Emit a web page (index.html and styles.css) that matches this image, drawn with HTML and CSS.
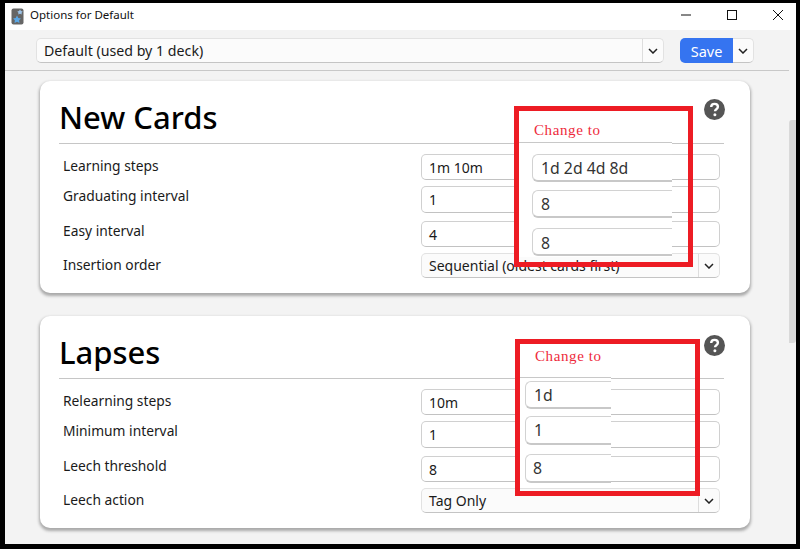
FILE: index.html
```html
<!DOCTYPE html>
<html lang="en">
<head>
<meta charset="utf-8">
<title>Options for Default</title>
<link rel="stylesheet" href="styles.css">
</head>
<body>
<div class="window">
  <header class="titlebar">
    <svg class="app-icon" width="14" height="17" viewBox="0 0 14 17"><rect x="0.5" y="0.5" width="12" height="16" rx="2" fill="#666"/><path d="M9 1.5l1 1.6 1.7.4-1.1 1.3.1 1.7L9 5.8l-1.700.7.1-1.700L6.300 3.500 8 3.100z" fill="#9ec4e8"/><path d="M6 7.500l1.300 2.400 2.700.5-1.900 1.900.4 2.700L6 13.800l-2.500 1.200.4-2.700L2 10.400l2.700-.5z" fill="#5aa7e6"/></svg>
    <span class="title-text">Options for Default</span>
    <div class="win-controls">
      <svg width="12" height="12" viewBox="0 0 12 12"><path d="M1 6h10" stroke="#111" fill="none"/></svg>
      <svg width="12" height="12" viewBox="0 0 12 12"><rect x="1.500" y="1.500" width="9" height="9" stroke="#111" fill="none"/></svg>
      <svg width="12" height="12" viewBox="0 0 12 12"><path d="M1 1l10 10M11 1L1 11" stroke="#111" fill="none"/></svg>
    </div>
  </header>
  <div class="toolbar">
    <div class="toolbar-inner">
      <div class="select deck-select">
        <span class="select-value">Default (used by 1 deck)</span>
        <span class="select-arrow"><svg width="10" height="6" viewBox="0 0 10 6"><path d="M1 1l4 4 4-4" stroke="#222" stroke-width="1.500" fill="none"/></svg></span>
      </div>
      <div class="save-group">
        <button class="save-btn">Save</button>
        <span class="save-arrow"><svg width="10" height="6" viewBox="0 0 10 6"><path d="M1 1l4 4 4-4" stroke="#222" stroke-width="1.500" fill="none"/></svg></span>
      </div>
    </div>
  </div>
  <div class="content-row">
    <main class="content">
      <section class="card">
        <h2 class="card-title">New Cards</h2>
        <svg class="help" width="21" height="21" viewBox="0 0 21 21"><circle cx="10.500" cy="10.500" r="10.500" fill="#555"/><path d="M7.200 8.100c0-2 1.500-3.200 3.400-3.200s3.300 1.100 3.300 2.900c0 2.400-2.900 2.500-2.900 4.500" stroke="#fff" stroke-width="2.400" fill="none"/><circle cx="10.900" cy="15.800" r="1.500" fill="#fff"/></svg>
        <div class="rows">
          <div class="label">Learning steps</div><div class="field">1m 10m</div>
          <div class="label label-up">Graduating interval</div><div class="field field-tall">1</div>
          <div class="label label-up">Easy interval</div><div class="field">4</div>
          <div class="label">Insertion order</div>
          <div class="select row-select"><span class="select-value">Sequential (oldest cards first)</span><span class="select-arrow"><svg width="10" height="6" viewBox="0 0 10 6"><path d="M1 1l4 4 4-4" stroke="#222" stroke-width="1.500" fill="none"/></svg></span></div>
        </div>
        <div class="note note-new">
          <div class="paste paste-new">
            <span class="change-to">Change to</span>
            <span class="paste-line"></span>
            <div class="paste-field pf-a">1d 2d 4d 8d</div>
            <div class="paste-field pf-b">8</div>
            <div class="paste-field pf-c">8</div>
          </div>
        </div>
      </section>
      <section class="card">
        <h2 class="card-title">Lapses</h2>
        <svg class="help help-lapses" width="21" height="21" viewBox="0 0 21 21"><circle cx="10.500" cy="10.500" r="10.500" fill="#555"/><path d="M7.200 8.100c0-2 1.500-3.200 3.400-3.200s3.300 1.100 3.300 2.900c0 2.400-2.900 2.500-2.900 4.500" stroke="#fff" stroke-width="2.400" fill="none"/><circle cx="10.900" cy="15.800" r="1.500" fill="#fff"/></svg>
        <div class="rows">
          <div class="label">Relearning steps</div><div class="field">10m</div>
          <div class="label label-up">Minimum interval</div><div class="field field-tall">1</div>
          <div class="label label-up">Leech threshold</div><div class="field">8</div>
          <div class="label">Leech action</div>
          <div class="select row-select"><span class="select-value">Tag Only</span><span class="select-arrow"><svg width="10" height="6" viewBox="0 0 10 6"><path d="M1 1l4 4 4-4" stroke="#222" stroke-width="1.500" fill="none"/></svg></span></div>
        </div>
        <div class="note note-lapses">
          <div class="paste paste-lapses">
            <span class="change-to change-to-lapses">Change to</span>
            <span class="paste-line"></span>
            <div class="paste-field pf-d">1d</div>
            <div class="paste-field pf-e">1</div>
            <div class="paste-field pf-f">8</div>
          </div>
        </div>
      </section>
    </main>
    <div class="scrollbar"><div class="thumb"></div></div>
  </div>
</div>
</body>
</html>
```
FILE: styles.css
```css
* { box-sizing: border-box; }
html, body { margin: 0; height: 100%; }
body {
  background: #000;
  padding: 3px 4px 5px 5px;
  font-family: "Noto Sans", "Open Sans", sans-serif;
  color: #1a1a1a;
  overflow: hidden;
}
.window {
  height: 541px;
  background: #f3f3f3;
  display: flex;
  flex-direction: column;
  overflow: hidden;
}
.titlebar {
  height: 27px;
  flex: none;
  background: #fff;
  display: flex;
  align-items: center;
  padding-left: 6px;
}
.app-icon { flex: none; }
.title-text { font-size: 11.500px; line-height: 16px; margin: -4px 0 0 5px; color: #111; }
.win-controls {
  margin-left: auto;
  display: flex;
  gap: 34px;
  padding-right: 12px;
  margin-top: -3px;
}
.toolbar { height: 41px; flex: none; padding-right: 7px; }
.toolbar-inner {
  height: 41px;
  border-bottom: 1px solid #c8c8c8;
  display: flex;
  align-items: flex-start;
  padding: 8px 35px 0 31px;
}
.select {
  display: flex;
  background: #fbfbfb;
  border: 1px solid #e2e2e2;
  border-bottom: 1px solid #c4c4c4;
  border-radius: 5px;
  font-size: 14px;
}
.select-value { flex: 1; padding-left: 7px; white-space: nowrap; overflow: hidden; }
.select-arrow {
  width: 21px;
  flex: none;
  border-left: 1px solid #ddd;
  display: flex;
  align-items: center;
  justify-content: center;
}
.deck-select { width: 629px; height: 25px; line-height: 23px; font-size: 14.200px; }
.save-group { margin-left: 16px; display: flex; height: 25px; }
.save-btn {
  width: 53px;
  height: 25px;
  border: 0;
  padding: 0;
  background: #3574f0;
  color: #fff;
  font: 14.500px "Noto Sans", sans-serif;
  border-radius: 5px 0 0 5px;
}
.save-arrow {
  width: 21px;
  background: #fbfbfb;
  border: 1px solid #e2e2e2;
  border-bottom-color: #c4c4c4;
  border-left: 0;
  border-radius: 0 5px 5px 0;
  display: flex;
  align-items: center;
  justify-content: center;
}
.content-row { flex: 1; display: flex; min-height: 0; }
.content { flex: 1; padding: 10px 0 0 35px; min-width: 0; }
.scrollbar { width: 7px; flex: none; padding-top: 49px; }
.thumb { height: 223px; background: #d9d9d9; border-radius: 3px 0 3px 0; }
.card {
  position: relative;
  width: 710px;
  height: 212px;
  background: #fff;
  border-radius: 10px;
  box-shadow: 0 2px 3px 1px rgba(0, 0, 0, .3);
  padding: 0 26px 0 19px;
  margin-bottom: 23px;
}
.card-title {
  margin: 0;
  height: 63px;
  border-bottom: 1px solid #c6c6c6;
  padding: 12px 0 0;
  font-size: 31px;
  line-height: 48px;
  font-weight: 500;
  color: #000;
}
.help { position: absolute; left: 664px; top: 18px; }
.help-lapses { top: 19px; }
.rows {
  margin-top: 10px;
  display: grid;
  grid-template-columns: 358px 299px;
  grid-template-rows: 32px 35px 32px 25px;
  padding-left: 4px;
}
.label { font-size: 13.800px; line-height: 24px; color: #1a1a1a; }
.label-up { margin-top: -2px; }
.field {
  height: 26px;
  line-height: 26px;
  border: 1px solid #d0d0d0;
  border-bottom-color: #c2c2c2;
  border-radius: 5px;
  background: #fff;
  padding-left: 7px;
  font-size: 14px;
}
.field-tall { height: 27px; }
.row-select { height: 25px; line-height: 23px; }
.note { position: absolute; border: 5px solid #ed1c24; z-index: 2; }
.note-new { left: 474px; top: 25px; width: 179px; height: 161px; }
.note-lapses { left: 475px; top: 23px; width: 185px; height: 157px; }
.paste { position: absolute; left: 0; top: 0; background: #fff; z-index: -1; }
.paste-new { width: 153px; height: 146px; }
.paste-lapses { width: 91px; height: 143px; }
.change-to {
  position: absolute;
  left: 15px;
  top: 10px;
  font: 15px/18px "Liberation Serif", serif;
  letter-spacing: .6px;
  color: #ee2a3c;
  white-space: nowrap;
}
.change-to-lapses { top: 3px; }
.paste-line { position: absolute; left: 0; right: 0; height: 1px; background: #c8c8c8; }
.paste-new .paste-line { top: 31px; }
.paste-lapses .paste-line { top: 33px; }
.paste-field {
  position: absolute;
  right: 0;
  height: 28px;
  line-height: 27px;
  border: 1px solid #d2d2d2;
  border-bottom: 2px solid #c8c8c8;
  border-right: 0;
  border-radius: 6px 0 0 6px;
  font-size: 15.800px;
  padding-left: 8px;
  color: #333;
}
.pf-a { left: 13px; top: 43px; }
.pf-b { left: 13px; top: 79px; }
.pf-c { left: 13px; top: 117px; line-height: 29px; }
.pf-d { left: 5px; top: 37px; }
.pf-e { left: 5px; top: 72px; height: 29px; }
.pf-f { left: 5px; top: 110px; height: 29px; padding-left: 7px; }
```
